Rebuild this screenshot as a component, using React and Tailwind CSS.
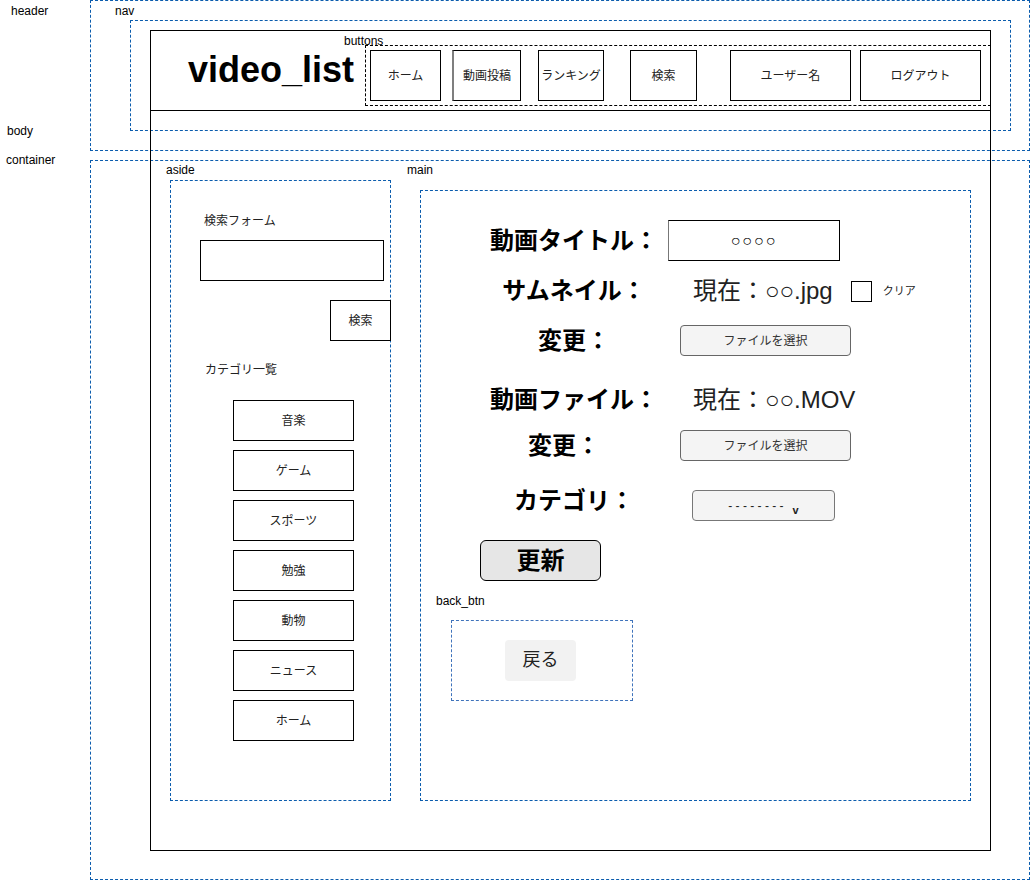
import React from 'react';

const navButtons = [
  { label: 'ホーム', cls: 'w-[71px]' },
  { label: '動画投稿', cls: 'w-[69px] ml-[11px] border-l-2 border-l-[#7f7f7f]' },
  { label: 'ランキング', cls: 'w-[66px] ml-[17px]' },
  { label: '検索', cls: 'w-[67px] ml-[26px]' },
  { label: 'ユーザー名', cls: 'w-[121px] ml-[33px]' },
  { label: 'ログアウト', cls: 'w-[121px] ml-[9px]' },
];

const categories = ['音楽', 'ゲーム', 'スポーツ', '勉強', '動物', 'ニュース', 'ホーム'];

// one form row: bold label centred in a 200px column, value after it
const Row = ({ label, className = '', labelClass = '', children }) => (
  <div className={`ml-[53px] flex items-center ${className}`}>
    <div className={`w-[200px] text-center text-[24px] leading-[30px] font-bold whitespace-nowrap ${labelClass}`}>{label}</div>
    {children}
  </div>
);

const FileButton = () => (
  <div className="ml-[6px] w-[171px] h-[31px] flex items-center justify-center rounded-[4px] border border-[#666] bg-[#f4f4f4] text-[12px] text-[#333]">
    ファイルを選択
  </div>
);

const Tag = ({ className = '', children }) => (
  <span className={`text-[12px] leading-[14px] whitespace-nowrap ${className}`}>{children}</span>
);

const App = () => {
  return (
    <div className="relative w-[1031px] h-[881px] bg-white overflow-hidden text-black font-['Liberation_Sans','Noto_Sans_CJK_JP',sans-serif]">
      {/* diagram regions drawn on the canvas */}
      <div className="absolute left-[90px] top-0 w-[940px] h-[151px] border border-dashed border-[#0b5cad]"></div>
      <div className="absolute left-[130px] top-[20px] w-[881px] h-[111px] border border-dashed border-[#0b5cad]"></div>
      <div className="absolute left-[90px] top-[160px] w-[940px] h-[720px] border border-dashed border-[#0b5cad]"></div>
      <Tag className="absolute left-[11px] top-[4px]">header</Tag>
      <Tag className="absolute left-[115px] top-[4px]">nav</Tag>
      <Tag className="absolute left-[7px] top-[124px]">body</Tag>
      <Tag className="absolute left-[6px] top-[153px]">container</Tag>

      {/* body frame */}
      <div className="absolute left-[150px] top-[30px] w-[841px] h-[821px] border border-black flex flex-col">
        {/* nav bar */}
        <div className="h-[80px] shrink-0 border-b border-black flex items-start">
          <h1 className="ml-[37px] mt-[19px] text-[36px] leading-[40px] font-bold">video_list</h1>
          <div className="relative ml-auto mr-[-1px] mt-[14px] w-[626px] h-[61px] border border-dashed border-black flex items-start pl-[4px] pt-[4px]">
            <Tag className="absolute left-[-22px] top-[-12px]">buttons</Tag>
            {navButtons.map((b) => (
              <div
                key={b.label}
                className={`h-[51px] shrink-0 flex items-center justify-center border border-black bg-white text-[12px] text-[#222] whitespace-nowrap ${b.cls}`}
              >
                {b.label}
              </div>
            ))}
          </div>
        </div>

        <div className="flex items-start">
          {/* aside */}
          <div className="ml-[19px] mt-[52px] flex flex-col items-start">
            <Tag className="ml-[-4px]">aside</Tag>
            <div className="mt-[3px] w-[221px] h-[621px] border border-dashed border-[#0b5cad] flex flex-col items-start pl-[29px]">
              <Tag className="ml-[4px] mt-[33px] text-[#222]">検索フォーム</Tag>
              <div className="mt-[12px] w-[184px] h-[41px] border border-black bg-white"></div>
              <div className="self-end mr-[-1px] mt-[19px] w-[61px] h-[41px] flex items-center justify-center border border-black bg-white text-[12px] text-[#222]">
                検索
              </div>
              <Tag className="ml-[5px] mt-[22px] text-[#222]">カテゴリ一覧</Tag>
              <div className="ml-[33px] mt-[23px] w-[121px] flex flex-col gap-[9px]">
                {categories.map((c) => (
                  <div key={c} className="h-[41px] flex items-center justify-center border border-black bg-white text-[12px] text-[#222]">
                    {c}
                  </div>
                ))}
              </div>
            </div>
          </div>

          {/* main */}
          <div className="ml-[29px] mt-[52px] flex flex-col items-start">
            <Tag className="ml-[-13px]">main</Tag>
            <div className="mt-[13px] w-[551px] h-[611px] border border-dashed border-[#0b5cad] flex flex-col items-start pt-[29px]">
              <Row label="動画タイトル：">
                <div className="ml-[-6px] w-[172px] h-[41px] flex items-center justify-center border border-black border-l-[#777] bg-white text-[16px] tracking-[2px]">
                  ○○○○
                </div>
              </Row>
              <Row label="サムネイル：" className="mt-[15px]">
                <span className="ml-[19px] text-[24px] leading-[30px] text-[#222] whitespace-nowrap">現在：○○.jpg</span>
                <div className="ml-[18px] w-[21px] h-[21px] border border-black bg-white"></div>
                <span className="ml-[11px] text-[11px] text-[#222]">クリア</span>
              </Row>
              <Row label="変更：" className="mt-[19px]">
                <FileButton />
              </Row>
              <Row label="動画ファイル：" className="mt-[29px]">
                <span className="ml-[19px] text-[24px] leading-[30px] text-[#222] whitespace-nowrap">現在：○○.MOV</span>
              </Row>
              <Row label="変更：" labelClass="pr-[20px]" className="mt-[15px]">
                <FileButton />
              </Row>
              <Row label="カテゴリ：" labelClass="mt-[-10px]" className="mt-[29px]">
                <div className="ml-[18px] w-[143px] h-[31px] flex items-center justify-center rounded-[4px] border border-[#777] bg-[#f4f4f4] text-[12px] text-[#222]">
                  <span className="whitespace-pre">- - - - - - - -</span>
                  <span className="ml-[9px] mt-[9px] font-bold text-[11px]">v</span>
                </div>
              </Row>
              <button className="ml-[59px] mt-[19px] w-[121px] h-[41px] flex items-center justify-center rounded-[6px] border border-black bg-[#e6e6e6] text-[24px] font-bold">
                更新
              </button>
              <Tag className="ml-[15px] mt-[13px]">back_btn</Tag>
              <div className="ml-[30px] mt-[12px] w-[182px] h-[81px] border border-dashed border-[#3f73bb] flex items-start pl-[53px] pt-[19px]">
                <button className="w-[71px] h-[41px] flex items-center justify-center rounded-[4px] bg-[#f2f2f2] text-[18px] text-[#222]">
                  戻る
                </button>
              </div>
            </div>
          </div>
        </div>
      </div>
    </div>
  );
};

export default App;
